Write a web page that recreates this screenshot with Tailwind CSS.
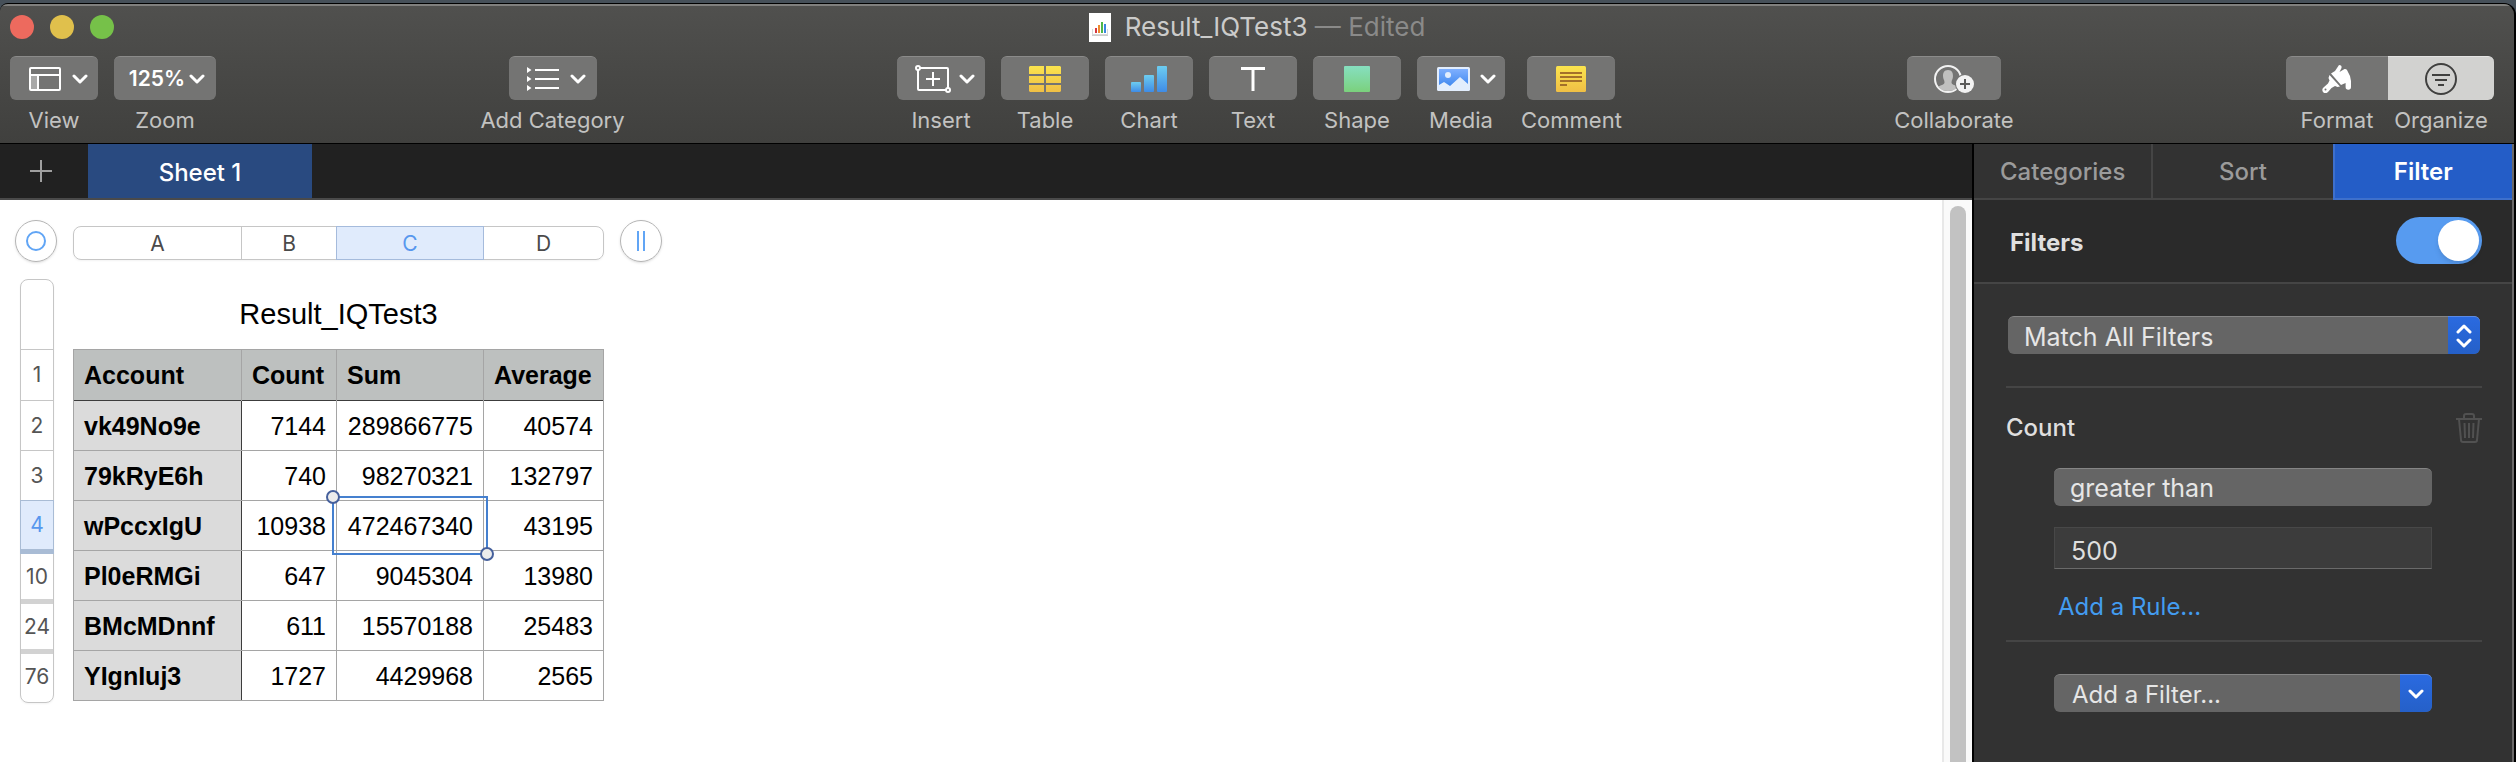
<!DOCTYPE html>
<html lang="en">
<head>
<meta charset="utf-8">
<title>Result_IQTest3</title>
<script src="https://cdn.jsdelivr.net/npm/@tailwindcss/browser@4"></script>
</head>
<body class="bg-[#465059] font-['Inter',sans-serif]">
<div class="flex min-h-screen flex-col pt-[3px]">
<div class="flex grow flex-col overflow-hidden rounded-tl-lg rounded-tr-xl border-t border-r-2 border-black bg-[#2f2f2f]">

<header class="border-t-2 border-b border-t-[#80807e] border-b-black bg-linear-to-b from-[#50504e] to-[#40403e]">
  <div class="grid h-[42px] grid-cols-[1fr_auto_1fr] items-center px-[10px]">
    <div class="flex gap-4">
      <button aria-label="Close" class="size-6 rounded-full bg-[#ed6a5e]"></button>
      <button aria-label="Minimize" class="size-6 rounded-full bg-[#e0c04c]"></button>
      <button aria-label="Full screen" class="size-6 rounded-full bg-[#76c149]"></button>
    </div>
    <h1 class="flex items-center gap-[14px] text-[26px] leading-[30px] text-[#cbcbca]">
      <svg width="22" height="29" viewBox="0 0 22 29"><path fill="#fff" d="M0 0h22v29H0z"/><path fill="#d8d8d8" d="M3 21h16v1H3zM3 16h1v5H3zM18 16h1v5h-1z"/><path fill="#cdcdcd" d="M3 22h16v1H3z"/><path fill="#d6383e" d="M6 15h2v5H6z"/><path fill="#ee8a30" d="M9 12h2v8H9z"/><path fill="#4fb748" d="M12 9h2v11h-2z"/><path fill="#3a86e0" d="M15 11h2v9h-2z"/></svg>
      <span>Result_IQTest3 <span class="text-[#8a8a89]">— Edited</span></span>
    </h1>
    <div></div>
  </div>
  <div class="flex h-[95px] items-start justify-between pt-2 pr-5 pl-[10px] text-[22px] leading-[26px] text-[#c2c2c1]">
    <div class="-mr-2 flex gap-4">
      <button class="flex flex-col items-center gap-[7px]">
        <span class="flex h-11 w-[88px] items-center justify-center gap-[11px] rounded-md border-t border-[#8b8b8a] bg-[#747473] pl-2">
          <svg width="32" height="24" viewBox="0 0 32 24" fill="none" stroke="#fff" stroke-width="2"><path fill="#a9a9a8" stroke="none" d="M1 8h8v15H1z"/><rect x="1" y="1" width="30" height="22" rx="1"/><path d="M1 8h30M9 8v15"/></svg>
          <svg width="16" height="10" viewBox="0 0 16 10" fill="none" stroke="#fff" stroke-width="3" stroke-linecap="round" stroke-linejoin="round"><path d="m2 2 6 6 6-6"/></svg>
        </span>View
      </button>
      <button class="flex flex-col items-center gap-[7px]">
        <span class="flex h-11 w-[102px] items-center justify-center gap-1 rounded-md border-t border-[#8b8b8a] bg-[#747473] pl-1 text-[21px] font-semibold text-white">125%
          <svg width="16" height="10" viewBox="0 0 16 10" fill="none" stroke="#fff" stroke-width="3" stroke-linecap="round" stroke-linejoin="round"><path d="m2 2 6 6 6-6"/></svg>
        </span>Zoom
      </button>
    </div>
    <button class="flex flex-col items-center gap-[7px]">
      <span class="flex h-11 w-[88px] items-center justify-center gap-[11px] rounded-md border-t border-[#8b8b8a] bg-[#747473] pl-2">
        <svg width="32" height="24" viewBox="0 0 32 24" fill="#fff"><path d="M0 0l4.500 3L0 6zM0 9l4.500 3L0 15zM0 18l4.500 3L0 24zM8 2h24v2H8zM8 11h24v2H8zM8 20h24v2H8z"/></svg>
        <svg width="16" height="10" viewBox="0 0 16 10" fill="none" stroke="#fff" stroke-width="3" stroke-linecap="round" stroke-linejoin="round"><path d="m2 2 6 6 6-6"/></svg>
      </span>Add Category
    </button>
    <div class="flex gap-4">
      <button class="flex flex-col items-center gap-[7px]">
        <span class="flex h-11 w-[88px] items-center justify-center gap-2 rounded-md border-t border-[#8b8b8a] bg-[#747473] pl-2">
          <svg width="36" height="28" viewBox="0 0 36 28" fill="none" stroke="#fff" stroke-width="2"><rect x="3" y="3" width="30" height="22" rx="1"/><path d="M18 7v14M11 14h14"/><circle cx="3" cy="3" r="2" fill="#747473"/><circle cx="33" cy="25" r="2" fill="#747473"/></svg>
          <svg width="16" height="10" viewBox="0 0 16 10" fill="none" stroke="#fff" stroke-width="3" stroke-linecap="round" stroke-linejoin="round"><path d="m2 2 6 6 6-6"/></svg>
        </span>Insert
      </button>
      <button class="flex flex-col items-center gap-[7px]">
        <span class="flex h-11 w-[88px] items-center justify-center rounded-md border-t border-[#8b8b8a] bg-[#747473]">
          <svg width="32" height="26" viewBox="0 0 32 26"><defs><linearGradient id="gy" gradientUnits="userSpaceOnUse" x1="0" y1="0" x2="0" y2="26"><stop stop-color="#fbe44e"/><stop offset="1" stop-color="#f0bf45"/></linearGradient></defs><path fill="url(#gy)" d="M1 0h14v8H0V1zM17 0h14l1 1v7H17zM0 10h15v7H0zM17 10h15v7H17zM0 19h15v7H1l-1-1zM17 19h15v6l-1 1H17z"/></svg>
        </span>Table
      </button>
      <button class="flex flex-col items-center gap-[7px]">
        <span class="flex h-11 w-[88px] items-center justify-center rounded-md border-t border-[#8b8b8a] bg-[#747473]">
          <svg width="36" height="26" viewBox="0 0 36 26"><defs><linearGradient id="gb" x1="0" y1="0" x2="0" y2="1"><stop stop-color="#6dcdf0"/><stop offset="1" stop-color="#3f8ce6"/></linearGradient></defs><rect y="16" width="10" height="10" rx="1" fill="url(#gb)"/><rect x="13" y="9" width="10" height="17" rx="1" fill="url(#gb)"/><rect x="26" width="10" height="26" rx="1" fill="url(#gb)"/></svg>
        </span>Chart
      </button>
      <button class="flex flex-col items-center gap-[7px]">
        <span class="flex h-11 w-[88px] items-center justify-center rounded-md border-t border-[#8b8b8a] bg-[#747473]">
          <svg width="24" height="24" viewBox="0 0 24 24" fill="#fff"><path d="M0 0h24v3H13.500v21h-3V3H0z"/></svg>
        </span>Text
      </button>
      <button class="flex flex-col items-center gap-[7px]">
        <span class="flex h-11 w-[88px] items-center justify-center rounded-md border-t border-[#8b8b8a] bg-[#747473]">
          <span class="size-[26px] rounded-[1px] bg-linear-to-b from-[#87dfc0] to-[#7bd17c]"></span>
        </span>Shape
      </button>
      <button class="flex flex-col items-center gap-[7px]">
        <span class="flex h-11 w-[88px] items-center justify-center gap-[10px] rounded-md border-t border-[#8b8b8a] bg-[#747473] pl-[10px]">
          <svg width="33" height="24" viewBox="0 0 33 24"><defs><linearGradient id="gm" x1="0" y1="0" x2="0" y2="1"><stop stop-color="#7fb0ff"/><stop offset="1" stop-color="#4189ef"/></linearGradient></defs><rect width="33" height="24" rx="1.500" fill="#e3eefd"/><path fill="url(#gm)" d="M2 2h29v15l-8-7-10 9-6-4-5 3z"/><circle cx="11" cy="8" r="3" fill="#e3eefd"/></svg>
          <svg width="16" height="10" viewBox="0 0 16 10" fill="none" stroke="#fff" stroke-width="3" stroke-linecap="round" stroke-linejoin="round"><path d="m2 2 6 6 6-6"/></svg>
        </span>Media
      </button>
      <button class="flex flex-col items-center gap-[7px]">
        <span class="flex h-11 w-[88px] items-center justify-center rounded-md border-t border-[#8b8b8a] bg-[#747473]">
          <svg width="30" height="26" viewBox="0 0 30 26"><rect width="30" height="26" rx="1.500" fill="url(#gy)"/><path fill="#a4702a" d="M4 6h22v2H4zM4 10h22v2H4zM4 14h22v2H4zM4 18h7v2H4z"/></svg>
        </span>Comment
      </button>
    </div>
    <button class="flex flex-col items-center gap-[7px]">
      <span class="flex h-11 w-[94px] items-center justify-center rounded-md border-t border-[#8b8b8a] bg-[#747473]">
        <svg width="40" height="28" viewBox="0 0 40 28"><circle cx="14" cy="14" r="13" fill="none" stroke="#f2f2f2" stroke-width="2"/><path fill="#c0c0bf" d="M14 5c-4 0-5 3-5 6 0 3 1.500 4 1.500 6.500S6 20 4.500 22c2.500 3 6 4 9.500 4s7-1 9.500-4c-1.500-2-6-2-6-4.500S19 14 19 11c0-3-1-6-5-6z"/><circle cx="31" cy="19" r="10" fill="#747473"/><circle cx="31" cy="19" r="9" fill="#f2f2f2"/><path stroke="#5b5b5a" stroke-width="2" d="M31 14v10M26 19h10"/></svg>
      </span>Collaborate
    </button>
    <div class="grid grid-cols-[102px_106px]">
      <button class="flex flex-col items-center gap-[7px]">
        <span class="flex h-11 w-full items-center justify-center rounded-l-md border-t border-[#8b8b8a] bg-[#747473]">
          <svg width="30" height="28" viewBox="0 0 30 28" fill="#fff"><path d="M17 0c2 0 3 1 2.500 3l-2 4 5-3c1 0 2 0 2.500 1l3 6 1 5v6a2.700 2.700 0 0 1-5.400 0v-4L19 20 9 8.500 13 6z"/><path d="M7.500 10l10.500 11.500-2.500.5-2.500-1-3.500 2L6 27a3.200 3.200 0 1 1-4.500-4.500L6 18.500l1.500-3-1-2.500z"/><circle cx="3.500" cy="24.500" r="1" fill="#747473"/></svg>
        </span>Format
      </button>
      <button class="flex flex-col items-center gap-[7px]">
        <span class="flex h-11 w-full items-center justify-center rounded-r-md border-t border-[#e4e4e3] bg-[#d2d2d0]">
          <svg width="32" height="32" viewBox="0 0 32 32" fill="none" stroke="#40403f" stroke-width="2"><circle cx="16" cy="16" r="15"/><path d="M7 12h18M10 17h12M13 22h6"/></svg>
        </span>Organize
      </button>
    </div>
  </div>
</header>

<div class="flex grow">
  <main class="flex min-w-0 grow flex-col">
    <nav class="flex h-14 items-stretch border-b-2 border-[#4a4a4a] bg-[#212121]">
      <button aria-label="Add sheet" class="flex w-[88px] items-center pl-[30px]">
        <svg width="22" height="22" viewBox="0 0 22 22" stroke="#a0a0a0" stroke-width="2"><path d="M11 0v22M0 11h22"/></svg>
      </button>
      <button class="w-56 bg-[#294a80] pt-[3px] text-[24px] font-medium text-white">Sheet 1</button>
    </nav>
    <div class="flex grow bg-white">
      <section class="grow pt-5 pl-[15px]">
        <div class="flex h-[42px] items-center">
          <button aria-label="Select table" class="flex size-[42px] items-center justify-center rounded-full border border-[#b4b4b4] shadow-sm"><span class="size-5 rounded-full border-2 border-[#61a5f5]"></span></button>
          <div class="mt-[3px] mr-4 ml-4 flex h-[34px] rounded-lg border border-[#c6c6c6] text-[21px] text-[#4a4a4a] shadow-xs">
            <button class="w-[167px] pt-px">A</button>
            <button class="w-[95px] border-l border-[#c6c6c6] pt-px">B</button>
            <button class="-my-px w-[148px] border border-[#a5bbdc] bg-[#e0ebfc] pt-px text-[#5797ee]">C</button>
            <button class="w-[119px] pt-px">D</button>
          </div>
          <button aria-label="Add column" class="flex size-[42px] items-center justify-center rounded-full border border-[#b4b4b4] shadow-sm"><span class="h-5 w-2 border-x-2 border-[#61a5f5]"></span></button>
        </div>
        <div class="mt-[17px] flex items-start pl-[5px]">
          <div class="flex h-[424px] w-[34px] flex-col rounded-lg border border-[#c6c6c6] text-[21px] text-[#555] shadow-xs">
            <div class="h-[69px]"></div>
            <button class="h-[51px] border-t border-[#c6c6c6]">1</button>
            <button class="h-[50px] border-t border-[#c6c6c6]">2</button>
            <button class="h-[50px] border-t border-[#c6c6c6]">3</button>
            <button class="-mx-px h-[54px] border border-b-[5px] border-[#a9bcd5] bg-[#e0ebfc] text-[#5797ee]">4</button>
            <button class="h-[50px] border-b-[5px] border-[#d2d2d2]">10</button>
            <button class="h-[50px] border-b-[5px] border-[#d2d2d2]">24</button>
            <button class="h-[46px]">76</button>
          </div>
          <table class="ml-[19px] table-fixed border-collapse text-right text-[25px] leading-[28px] font-['Liberation_Sans',sans-serif] text-black">
            <caption class="h-[70px] pt-[19px] text-center text-[29px] leading-[32px]">Result_IQTest3</caption>
            <colgroup><col class="w-[168px]"><col class="w-[95px]"><col class="w-[147px]"><col class="w-[120px]"></colgroup>
            <thead>
              <tr class="h-[51px] border-b border-[#3c3c3c] bg-[#bdc0bf] text-left">
                <th class="border-x border-t border-x-[#a5a5a5] border-t-[#a5a5a5] px-[10px]">Account</th>
                <th class="border-x border-t border-x-[#a5a5a5] border-t-[#a5a5a5] px-[10px]">Count</th>
                <th class="border-x border-t border-x-[#a5a5a5] border-t-[#a5a5a5] px-[10px]">Sum</th>
                <th class="border-x border-t border-x-[#a5a5a5] border-t-[#a5a5a5] px-[10px]">Average</th>
              </tr>
            </thead>
            <tbody>
              <tr class="h-[50px]"><th class="border border-t-[#3c3c3c] border-r-[#3c3c3c] border-b-[#a5a5a5] border-l-[#a5a5a5] bg-[#dbdbdb] px-[10px] pt-px text-left">vk49No9e</th><td class="border-r border-b border-[#a5a5a5] px-[10px] pt-px">7144</td><td class="border-r border-b border-[#a5a5a5] px-[10px] pt-px">289866775</td><td class="border-r border-b border-[#a5a5a5] px-[10px] pt-px">40574</td></tr>
              <tr class="h-[50px]"><th class="border border-r-[#3c3c3c] border-b-[#a5a5a5] border-l-[#a5a5a5] border-t-[#a5a5a5] bg-[#dbdbdb] px-[10px] pt-px text-left">79kRyE6h</th><td class="border-r border-b border-[#a5a5a5] px-[10px] pt-px">740</td><td class="border-r border-b border-[#a5a5a5] px-[10px] pt-px">98270321</td><td class="border-r border-b border-[#a5a5a5] px-[10px] pt-px">132797</td></tr>
              <tr class="h-[50px]"><th class="border border-r-[#3c3c3c] border-b-[#a5a5a5] border-l-[#a5a5a5] border-t-[#a5a5a5] bg-[#dbdbdb] px-[10px] pt-px text-left">wPccxIgU</th><td class="border-r border-b border-[#a5a5a5] px-[10px] pt-px">10938</td><td class="relative border-r border-b border-[#a5a5a5] px-[10px] pt-px">472467340<span class="absolute -inset-[5px] border-2 border-[#4580cf]"><span class="absolute -top-2 -left-2 size-[14px] rounded-full border-2 border-[#46609c] bg-[#ececec]"></span><span class="absolute -right-2 -bottom-2 size-[14px] rounded-full border-2 border-[#46609c] bg-[#ececec]"></span></span></td><td class="border-r border-b border-[#a5a5a5] px-[10px] pt-px">43195</td></tr>
              <tr class="h-[50px]"><th class="border border-r-[#3c3c3c] border-b-[#a5a5a5] border-l-[#a5a5a5] border-t-[#a5a5a5] bg-[#dbdbdb] px-[10px] pt-px text-left">Pl0eRMGi</th><td class="border-r border-b border-[#a5a5a5] px-[10px] pt-px">647</td><td class="border-r border-b border-[#a5a5a5] px-[10px] pt-px">9045304</td><td class="border-r border-b border-[#a5a5a5] px-[10px] pt-px">13980</td></tr>
              <tr class="h-[50px]"><th class="border border-r-[#3c3c3c] border-b-[#a5a5a5] border-l-[#a5a5a5] border-t-[#a5a5a5] bg-[#dbdbdb] px-[10px] pt-px text-left">BMcMDnnf</th><td class="border-r border-b border-[#a5a5a5] px-[10px] pt-px">611</td><td class="border-r border-b border-[#a5a5a5] px-[10px] pt-px">15570188</td><td class="border-r border-b border-[#a5a5a5] px-[10px] pt-px">25483</td></tr>
              <tr class="h-[50px]"><th class="border border-r-[#3c3c3c] border-b-[#a5a5a5] border-l-[#a5a5a5] border-t-[#a5a5a5] bg-[#dbdbdb] px-[10px] pt-px text-left">YIgnIuj3</th><td class="border-r border-b border-[#a5a5a5] px-[10px] pt-px">1727</td><td class="border-r border-b border-[#a5a5a5] px-[10px] pt-px">4429968</td><td class="border-r border-b border-[#a5a5a5] px-[10px] pt-px">2565</td></tr>
            </tbody>
          </table>
        </div>
      </section>
      <div class="flex w-[30px] border-l-2 border-[#e8e8e8] bg-[#fafafa] pt-[6px] pl-[6px]"><div class="w-4 rounded-t-full bg-[#c2c2c2]"></div></div>
    </div>
  </main>

  <aside class="w-[542px] shrink-0 border-r-2 border-l-2 border-r-[#6a6868] border-l-black bg-[#323232] text-[#dfdfdf]">
    <div class="grid h-14 grid-cols-3 text-[24px] font-medium text-[#9b9b9b]">
      <button class="border-r-2 border-b-2 border-[#454545] pt-[2px]">Categories</button>
      <button class="border-b-2 border-[#454545] pt-[2px]">Sort</button>
      <button class="border-b-2 border-l-2 border-[#3e70cc] bg-[#245dc7] pt-[2px] font-semibold text-white">Filter</button>
    </div>
    <div class="flex h-[84px] items-center justify-between border-b-2 border-[#454545] bg-[#2a2a2a] pr-[30px] pb-[2px] pl-9">
      <label for="on" class="pt-[5px] text-[24px] font-bold">Filters</label>
      <input id="on" type="checkbox" checked class="flex h-[47px] w-[86px] appearance-none items-center justify-end rounded-full bg-[#579bf0] pr-[3px] before:size-[41px] before:rounded-full before:bg-white before:shadow-md">
    </div>
    <div class="pt-8 pr-[30px] pl-8">
      <div class="relative mx-[2px]">
        <select aria-label="Match" class="block h-[38px] w-full appearance-none rounded-md border-t border-[#858585] bg-[#656565] pt-[2px] pl-4 text-[25px] leading-[30px] text-[#e6e6e6]"><option>Match All Filters</option></select>
        <span class="pointer-events-none absolute inset-y-0 right-0 flex w-8 items-center justify-center rounded-r-md border-t border-[#5a8ae6] bg-linear-to-b from-[#2a6ae0] to-[#2560c8]"><svg width="16" height="24" viewBox="0 0 16 24" fill="none" stroke="#fff" stroke-width="3" stroke-linecap="round" stroke-linejoin="round"><path d="m2 8 6-6 6 6M2 16l6 6 6-6"/></svg></span>
      </div>
      <div class="mt-8 flex h-[82px] items-center justify-between border-t-2 border-[#454545]">
        <h2 class="text-[24px] font-medium">Count</h2>
        <button aria-label="Delete filter"><svg width="26" height="30" viewBox="0 0 26 30" fill="none" stroke="#515151" stroke-width="2"><path d="M0 6h26M8 6V3q0-2 2-2h6q2 0 2 2v3M3 6l2 21q0 2 2 2h12q2 0 2-2l2-21M8.500 10l.5 15M13 10v15M17.500 10l-.5 15"/></svg></button>
      </div>
      <div class="mr-[50px] ml-12">
        <select aria-label="Rule" class="block h-[38px] w-full appearance-none rounded-md border-t border-[#858585] bg-[#656565] pt-px pl-4 text-[25px] leading-[30px] text-[#e6e6e6]"><option>greater than</option></select>
        <input aria-label="Value" value="500" class="mt-[21px] block h-[42px] w-full border border-[#484848] border-b-[#6a6a6a] bg-[#3c3c3c] pt-[6px] pl-4 text-[25px] leading-[30px] text-[#dfdfdf]">
        <a href="#" class="mt-[23px] block pl-1 text-[24px] leading-[30px] text-[#439cf0]">Add a Rule...</a>
      </div>
      <div class="mt-[18px] border-t-2 border-[#454545] pt-8">
        <div class="relative mr-[50px] ml-12">
          <select aria-label="Add a filter" class="block h-[38px] w-full appearance-none rounded-md border-t border-[#858585] bg-[#656565] pt-[2px] pl-[18px] text-[24px] leading-[30px] text-[#e6e6e6]"><option>Add a Filter...</option></select>
          <span class="pointer-events-none absolute inset-y-0 right-0 flex w-8 items-center justify-center rounded-r-md border-t border-[#5a8ae6] bg-linear-to-b from-[#2a6ae0] to-[#2560c8]"><svg width="16" height="10" viewBox="0 0 16 10" fill="none" stroke="#fff" stroke-width="3" stroke-linecap="round" stroke-linejoin="round"><path d="m2 2 6 6 6-6"/></svg></span>
        </div>
      </div>
    </div>
  </aside>
</div>

</div>
</div>
</body>
</html>
